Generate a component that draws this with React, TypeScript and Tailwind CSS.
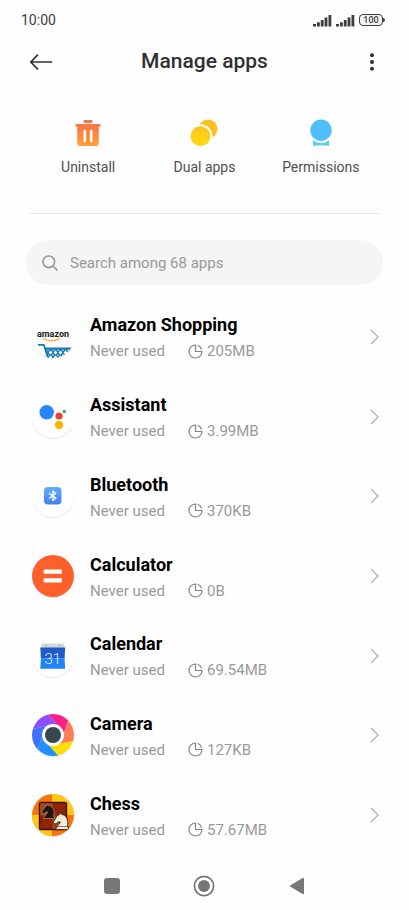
import { type ReactNode } from "react";

interface AppInfo {
  name: string;
  size: string;
  icon: ReactNode;
}

const AmazonIcon = () => (
  <svg viewBox="0 0 42 42" className="size-full">
    <defs>
      <pattern id="mesh" width="5" height="5" patternUnits="userSpaceOnUse" x="1" y="34">
        <rect width="5" height="5" fill="#1579b5" />
        <path d="M2.500 .6l1.900 1.900-1.900 1.900-1.900-1.900z" fill="#fff" />
        <path d="M0-.9l.9.900-.9.900zM5-.9v1.800l-.9-.9zM0 4.100l.9.900-.9.900zM5 4.100v1.800l-.9-.9z" fill="#fff" />
      </pattern>
    </defs>
    <text
      x="21"
      y="21"
      textAnchor="middle"
      fontSize="9"
      fontWeight="700"
      fill="#1a1a1a"
      fontFamily="Roboto, sans-serif"
    >
      amazon
    </text>
    <path d="M11 22.500q8 4.200 15 .8" fill="none" stroke="#f7a535" strokeWidth="1.200" />
    <path d="M25 22.200l2.500-.2-.9 2.400" fill="none" stroke="#f7a535" strokeWidth=".8" />
    <path d="M13 33h27l-6 10h-17.500z" fill="url(#mesh)" />
    <path d="M6 28.800h5.800l4.500 14.200" fill="none" stroke="#1579b5" strokeWidth="1.800" />
    <path d="M13 32.600h27" stroke="#1579b5" strokeWidth="2" />
  </svg>
);

const AssistantIcon = () => (
  <svg viewBox="0 0 42 42" className="size-full">
    <circle cx="14.700" cy="16.300" r="7.200" fill="#2684fc" />
    <circle cx="27" cy="20" r="3.600" fill="#ea4335" />
    <circle cx="32.300" cy="15.500" r="1.700" fill="#34a853" />
    <circle cx="27" cy="29" r="4.200" fill="#fbb500" />
  </svg>
);

const BluetoothIcon = () => (
  <svg viewBox="0 0 42 42" className="size-full">
    <defs>
      <linearGradient id="bt" x1="0" y1="0" x2="0" y2="1">
        <stop offset="0" stopColor="#5cb0f8" />
        <stop offset="1" stopColor="#4480f2" />
      </linearGradient>
    </defs>
    <rect x="12" y="12" width="17.500" height="17.500" rx="4" fill="url(#bt)" />
    <path
      d="M17.300 18.500l6.600 4.600-3.100 2.600v-9.700l3.100 2.600-6.600 4.600"
      fill="none"
      stroke="#fff"
      strokeWidth="1.200"
      strokeLinejoin="round"
      strokeLinecap="round"
    />
  </svg>
);

const CalculatorIcon = () => (
  <svg viewBox="0 0 42 42" className="size-full">
    <rect width="42" height="42" fill="#ff5f2b" />
    <rect x="11.700" y="14.600" width="18.200" height="4.200" rx="1" fill="#fff" />
    <rect x="11.700" y="23.200" width="18.200" height="4.200" rx="1" fill="#fff" />
  </svg>
);

const CalendarIcon = () => (
  <svg viewBox="0 0 42 42" className="size-full">
    <rect x="9.300" y="8.500" width="23" height="6" rx="1" fill="#d5d8db" />
    <circle cx="14" cy="10.500" r=".8" fill="#9a9fa5" />
    <circle cx="27.500" cy="10.500" r=".8" fill="#9a9fa5" />
    <path d="M8.300 12.600h24.900l-.6 10.700h-23.700z" fill="#1f5cc8" />
    <path d="M8.900 23.300h23.700l.5 10.500h-24.800z" fill="#1f83f5" />
    <text
      x="20.700"
      y="28.500"
      textAnchor="middle"
      fontSize="15"
      fontWeight="300"
      fill="#e3efff"
      fontFamily="Roboto, sans-serif"
    >
      31
    </text>
  </svg>
);

// shutter blades, clockwise from the top
const blades = [
  { color: "#ff1f8b", angle: -15 },
  { color: "#ff7b5a", angle: 45 },
  { color: "#ffde00", angle: 105 },
  { color: "#1e90ff", angle: 165 },
  { color: "#3f72ff", angle: 225 },
  { color: "#8a4dff", angle: 285 },
];

const CameraIcon = () => (
  <svg viewBox="0 0 42 42" className="size-full">
    {blades.map(({ color, angle }) => (
      <path
        key={color}
        d="M0-22L16-27L19.050-11L8.660 5L8.660-5z"
        transform={`translate(21 21) rotate(${angle})`}
        fill={color}
      />
    ))}
    <circle cx="21" cy="21" r="11" fill="#fff" />
    <circle cx="21" cy="21" r="8" fill="#37474f" />
  </svg>
);

const KNIGHT =
  "M3 14.500h10.500v-1.500l-1-.8c.8-2.700.8-5.400-.5-7.700c-1-1.700-2.500-2.700-4.300-3l-.9-1.500-.9 1.700c-1.800.7-2.900 2-3.400 3.600l-2 2.900 1.200 1.600 1.500-.4 1.400-1.200 2-.3c-.3 1.800-2.200 2.600-2.600 4.300l-1 .8z";

const ChessIcon = () => (
  <svg viewBox="0 0 42 42" className="size-full">
    <rect width="42" height="42" fill="#f4750a" />
    <path d="M20 0h22v21h-22zM0 21h20v21h-20z" fill="#ffc814" />
    <rect x="7.500" y="8.500" width="27" height="27" rx="1.500" fill="#8f2408" stroke="#3a1206" strokeWidth="1.400" />
    <path d="M8.200 9.200h12.300v12.300h-12.300zM20.500 21.500h13.300v13.300h-13.300z" fill="#a04a1a" />
    <path
      d={KNIGHT}
      transform="translate(9 10) scale(1)"
      fill="#1c1410"
      stroke="#c9a67a"
      strokeWidth=".6"
    />
    <path
      d={KNIGHT}
      transform="translate(20.500 18.500) scale(1.180)"
      fill="#f2ead8"
      stroke="#2b1a10"
      strokeWidth=".7"
    />
    <path d="M23 32.500h15" stroke="#5b4a38" strokeWidth=".7" />
  </svg>
);

const apps: AppInfo[] = [
  { name: "Amazon Shopping", size: "205MB", icon: <AmazonIcon /> },
  { name: "Assistant", size: "3.99MB", icon: <AssistantIcon /> },
  { name: "Bluetooth", size: "370KB", icon: <BluetoothIcon /> },
  { name: "Calculator", size: "0B", icon: <CalculatorIcon /> },
  { name: "Calendar", size: "69.54MB", icon: <CalendarIcon /> },
  { name: "Camera", size: "127KB", icon: <CameraIcon /> },
  { name: "Chess", size: "57.67MB", icon: <ChessIcon /> },
];

const Signal = () => (
  <svg viewBox="0 0 19 13" className="h-[13px] w-[19px]" fill="#3c3c3c">
    <rect x="0" y="10" width="3" height="2.500" />
    <rect x="4" y="8.300" width="2.800" height="4.200" />
    <rect x="7.800" y="6" width="2.800" height="6.500" />
    <rect x="11.600" y="3.500" width="2.800" height="9" />
    <rect x="15.500" y="1" width="2.800" height="11.500" />
  </svg>
);

const StatusBar = () => (
  <div className="flex h-10 items-center justify-between pr-6 pl-[21px] text-[#3c3c3c]">
    <span className="text-sm">10:00</span>
    <div className="flex items-center gap-1">
      <Signal />
      <Signal />
      <div className="flex items-center">
        <span className="flex h-3 w-6 items-center justify-center rounded border border-[#3c3c3c] bg-gray-100 text-[9px] leading-none font-medium">
          100
        </span>
        <span className="h-1 w-0.5 rounded-r-sm bg-[#3c3c3c]" />
      </div>
    </div>
  </div>
);

const Header = () => (
  <header className="flex h-[43px] items-center justify-between px-[29px] text-[#303030]">
    <button aria-label="Back" className="w-6">
      <svg
        viewBox="0 0 24 16"
        className="h-4 w-6"
        fill="none"
        stroke="currentColor"
        strokeWidth="1.700"
        strokeLinecap="round"
        strokeLinejoin="round"
      >
        <path d="M22.500 8H2M8.500 1.200L1.700 8l6.800 6.800" />
      </svg>
    </button>
    <h1 className="text-[21px] font-medium">Manage apps</h1>
    <button aria-label="More options" className="flex w-6 justify-end pr-1.5">
      <svg viewBox="0 0 4 18" className="h-[18px] w-1" fill="currentColor">
        <circle cx="2" cy="2.200" r="2" />
        <circle cx="2" cy="9" r="2" />
        <circle cx="2" cy="15.800" r="2" />
      </svg>
    </button>
  </header>
);

const UninstallIcon = () => (
  <svg viewBox="0 0 28 28" className="size-7">
    <defs>
      <linearGradient id="bin" x1="0" y1="0" x2="0" y2="1">
        <stop offset="0" stopColor="#f9744a" />
        <stop offset="1" stopColor="#ffa03c" />
      </linearGradient>
    </defs>
    <rect x="9.500" y="1" width="9" height="3" rx="1" fill="#ee7a4c" />
    <path
      d="M1.500 5h25v2.800h-1.700v16.200a3 3 0 0 1-3 3h-15.600a3 3 0 0 1-3-3v-16.200h-1.700z"
      fill="url(#bin)"
    />
    <path d="M10.800 12v10M17.200 12v10" stroke="#fff" strokeWidth="2.400" strokeLinecap="round" />
  </svg>
);

const DualAppsIcon = () => (
  <svg viewBox="0 0 28 28" className="size-7">
    <defs>
      <linearGradient id="dual" x1="0" y1="0" x2="0" y2="1">
        <stop offset="0" stopColor="#fcc419" />
        <stop offset="1" stopColor="#fddb14" />
      </linearGradient>
    </defs>
    <circle cx="18" cy="10" r="9.500" fill="#f9c01f" />
    <circle cx="10.500" cy="17.300" r="12" fill="#fefefe" />
    <circle cx="10.500" cy="17.300" r="10" fill="url(#dual)" />
  </svg>
);

const PermissionsIcon = () => (
  <svg viewBox="0 0 28 28" className="size-7">
    <path d="M6 19h16v8q-8-1.600-16 0z" fill="#62cdfa" />
    <circle cx="14" cy="11.300" r="12.500" fill="#fefefe" />
    <circle cx="14" cy="11.300" r="10.700" fill="#4fbeff" />
  </svg>
);

const Action = ({ label, icon }: { label: string; icon: ReactNode }) => (
  <button className="flex flex-col items-center gap-2.5 text-sm text-[#505050]">
    {icon}
    <span className="whitespace-nowrap">{label}</span>
  </button>
);

const AppRow = ({ app }: { app: AppInfo }) => (
  <li className="flex flex-1">
    <a href="#" className="flex flex-1 items-center">
      <span className="size-[42px] shrink-0 overflow-hidden rounded-full bg-white shadow-[0_1px_1px_rgba(0,0,0,0.10)]">
        {app.icon}
      </span>
      <span className="ml-4 flex flex-1 flex-col pt-[3px]">
        <span className="text-lg leading-[26px] font-bold text-black">{app.name}</span>
        <span className="flex items-center text-[15px] leading-[26px] text-[#999]">
          <span className="w-[98px]">Never used</span>
          <svg
            viewBox="0 0 15 15"
            className="mr-1 size-[15px]"
            fill="none"
            stroke="#858585"
            strokeWidth="1.200"
          >
            <path d="M7.500 1a6.500 6.500 0 1 0 6.500 6.500h-6.500z" />
            <path d="M9.600 1.300a6.500 6.500 0 0 1 4 4.300" />
          </svg>
          {app.size}
        </span>
      </span>
      <svg viewBox="0 0 9 16" className="h-4 w-[9px]" fill="none" stroke="#b0b0b0" strokeWidth="1.300">
        <path d="M1 1l7 7-7 7" />
      </svg>
    </a>
  </li>
);

const NavBar = () => (
  <nav className="grid h-[55px] grid-cols-3 items-center justify-items-center px-[66px] pt-1.5 text-[#777]">
    <button aria-label="Recent apps">
      <span className="block size-4 rounded-[3px] bg-current" />
    </button>
    <button aria-label="Home">
      <svg viewBox="0 0 22 22" className="size-[22px]" fill="currentColor">
        <circle cx="11" cy="11" r="9.600" fill="none" stroke="currentColor" strokeWidth="1.700" />
        <circle cx="11" cy="11" r="6" />
      </svg>
    </button>
    <button aria-label="Go back">
      <svg viewBox="0 0 16 18" className="h-[18px] w-4" fill="currentColor">
        <path d="M14 .8a.8 .8 0 0 1 1 .7v15a.8 .8 0 0 1-1 .7L1.200 9.600a.7 .7 0 0 1 0-1.200z" />
      </svg>
    </button>
  </nav>
);

export default function App() {
  return (
    <div className="flex min-h-screen flex-col bg-[#fefefe] font-[Roboto,sans-serif]">
      <StatusBar />
      <Header />
      <section className="mx-[30px] grid grid-cols-3 border-b border-[#e4e4e4] pt-9 pb-9">
        <Action label="Uninstall" icon={<UninstallIcon />} />
        <Action label="Dual apps" icon={<DualAppsIcon />} />
        <Action label="Permissions" icon={<PermissionsIcon />} />
      </section>
      <label className="mx-[26px] mt-[26px] mb-3 flex h-[45px] items-center gap-3 rounded-full bg-[#f5f5f5] px-4">
        <svg viewBox="0 0 16 16" className="size-4 shrink-0" fill="none" stroke="#999" strokeWidth="1.700">
          <circle cx="6.800" cy="6.800" r="5.800" />
          <path d="M11 11l4.300 4.300" />
        </svg>
        <input
          type="search"
          aria-label="Search apps"
          placeholder="Search among 68 apps"
          className="min-w-0 flex-1 bg-transparent pt-0.5 text-[15px] outline-none placeholder:text-[#999]"
        />
      </label>
      <ul className="flex flex-1 flex-col pr-[30px] pl-8">
        {apps.map((app) => (
          <AppRow key={app.name} app={app} />
        ))}
      </ul>
      <NavBar />
    </div>
  );
}
